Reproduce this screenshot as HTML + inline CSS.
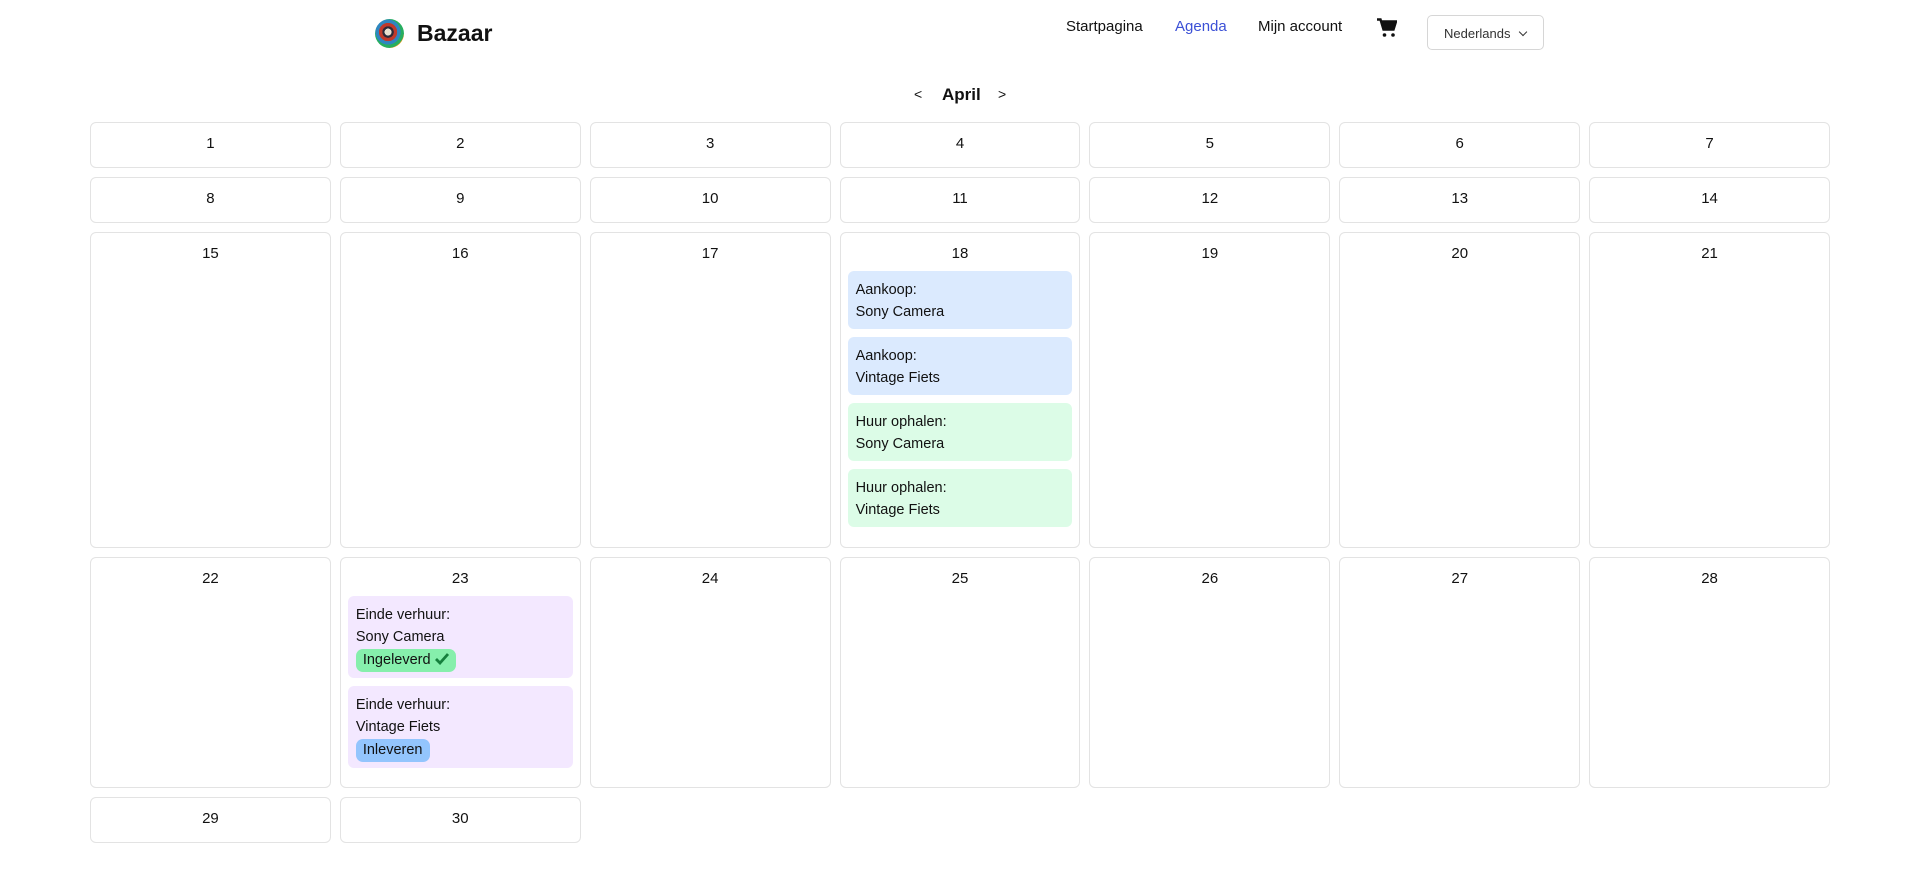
<!DOCTYPE html>
<html><head><meta charset="utf-8"><style>
*{box-sizing:border-box;margin:0;padding:0}
body{width:1919px;height:879px;background:#fff;font-family:"Liberation Sans",sans-serif;color:#111;position:relative;overflow:hidden}
.abs{position:absolute}
.logo{left:375px;top:19px;width:29px;height:29px;border-radius:50%;background:radial-gradient(circle at 45% 45%,#e8e0d0 0 15%,#2a2a3a 16% 25%,#c0392b 26% 40%,#2e86c1 41% 55%,#27ae60 56% 70%,#f39c12 71% 85%,#333 86%)}
.brand{left:417px;top:20px;font-size:23px;font-weight:bold;color:#111}
.nav{top:18px;font-size:15px;color:#111}
.cal{position:absolute;left:90px;top:122px;width:1740px;display:grid;grid-template-columns:repeat(7,1fr);gap:9px 9px}
.c{border:1px solid #e3e3e3;border-radius:6px;padding:12px 7px 8px;text-align:center;font-size:15px;min-height:46px}
.ev{border-radius:6px;text-align:left;padding:8px 8px 6px;margin-top:8px;line-height:22px;font-size:14.5px}
.b{background:#dbeafe}.g{background:#dcfce7}.p{background:#f3e8ff}
.badge{display:inline-block;border-radius:7px;padding:0 7px;line-height:23px;margin-top:1px}
</style></head><body>
<div class="abs logo"></div>
<div class="abs brand">Bazaar</div>
<div class="abs nav" style="left:1066px">Startpagina</div>
<div class="abs nav" style="left:1175px;color:#3b50d6">Agenda</div>
<div class="abs nav" style="left:1258px">Mijn account</div>
<svg class="abs" style="left:1377px;top:18px" width="20" height="20" viewBox="0 0 20 20"><path d="M0 1.5h3.5l3 10h10l2.5-8H5" fill="none" stroke="#111" stroke-width="2.4"/><path d="M5 3.5h14l-2.5 8h-10z" fill="#111"/><circle cx="7.5" cy="17" r="1.8" fill="#111"/><circle cx="16" cy="17" r="1.8" fill="#111"/></svg>
<div class="abs" style="left:1427px;top:15px;width:117px;height:35px;border:1px solid #d6d6d6;border-radius:5px;font-size:13px;color:#333;padding:10px 0 0 16px">Nederlands <span style="display:inline-block;width:6px;height:6px;border-right:1.5px solid #333;border-bottom:1.5px solid #333;transform:rotate(45deg);margin:0 0 3px 6px"></span></div>
<div class="abs" style="left:914px;top:86px;font-size:14px">&lt;</div>
<div class="abs" style="left:942px;top:85px;font-size:17px;font-weight:bold">April</div>
<div class="abs" style="left:998px;top:86px;font-size:14px">&gt;</div>
<div class="cal">
<div class="c">1</div><div class="c">2</div><div class="c">3</div><div class="c">4</div><div class="c">5</div><div class="c">6</div><div class="c">7</div>
<div class="c">8</div><div class="c">9</div><div class="c">10</div><div class="c">11</div><div class="c">12</div><div class="c">13</div><div class="c">14</div>
<div class="c" style="height:316px">15</div><div class="c">16</div><div class="c">17</div>
<div class="c">18
<div class="ev b" style="margin-top:9px">Aankoop:<br>Sony Camera</div>
<div class="ev b">Aankoop:<br>Vintage Fiets</div>
<div class="ev g">Huur ophalen:<br>Sony Camera</div>
<div class="ev g">Huur ophalen:<br>Vintage Fiets</div>
</div>
<div class="c">19</div><div class="c">20</div><div class="c">21</div>
<div class="c" style="height:231px">22</div>
<div class="c">23
<div class="ev p" style="margin-top:9px">Einde verhuur:<br>Sony Camera<br><span class="badge" style="background:#86efac">Ingeleverd <svg width="14" height="12" viewBox="0 0 14 12" style="vertical-align:-1px"><path d="M1 6l4 4 8-9" fill="none" stroke="#15803d" stroke-width="2.8"/></svg></span></div>
<div class="ev p">Einde verhuur:<br>Vintage Fiets<br><span class="badge" style="background:#93c5fd">Inleveren</span></div>
</div>
<div class="c">24</div><div class="c">25</div><div class="c">26</div><div class="c">27</div><div class="c">28</div>
<div class="c">29</div><div class="c">30</div>
</div>
</body></html>
